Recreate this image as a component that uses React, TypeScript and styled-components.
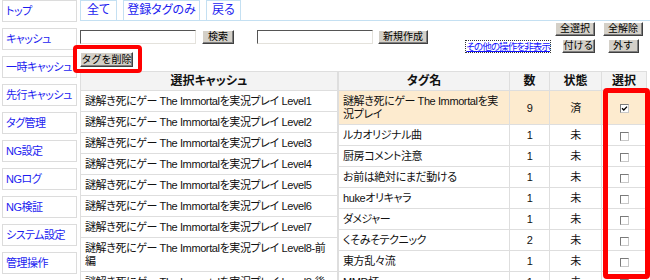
import styled, { createGlobalStyle } from "styled-components"

const GlobalStyle = createGlobalStyle`
  html, body {
    margin: 0;
    padding: 0;
    background: #fff;
    overflow: hidden;
  }
  body {
    font-family: "Liberation Sans", "Noto Sans CJK JP", sans-serif;
    font-size: 11px;
    color: #111;
    font-feature-settings: "palt";
  }
`

const Page = styled.div`
  position: relative;
  display: flex;
  gap: 3px;
  padding-left: 2px;
  width: 650px;
  height: 280px;
  box-sizing: border-box;
`

const Nav = styled.nav`
  width: 75px;
  flex: none;
  display: flex;
  flex-direction: column;
  gap: 6px;
`

const NavItem = styled.a`
  display: block;
  height: 22px;
  box-sizing: border-box;
  border: 1px solid #dcdcdc;
  padding: 4px 0 0 3px;
  color: #1c1cf0;
  font-size: 11px;
  line-height: 13px;
  letter-spacing: -0.5px;
  text-decoration: none;
  white-space: nowrap;
  overflow: hidden;
`

const Main = styled.div`
  flex: 1;
  min-width: 0;
`

const Tabs = styled.div`
  display: flex;
  gap: 6px;
  height: 20px;
  border-bottom: 1px solid #c4e0f2;
`

const Tab = styled.a<{ $w: number }>`
  width: ${p => p.$w}px;
  height: 20px;
  box-sizing: border-box;
  border: 1px solid #c4e0f2;
  border-bottom: none;
  text-align: center;
  font-size: 12px;
  line-height: 19px;
  color: #1c1cf0;
  white-space: nowrap;
`

const Toolbar = styled.div`
  display: flex;
  justify-content: space-between;
  align-items: flex-start;
  height: 50px;
`

const LeftTools = styled.div`
  padding-top: 9px;
  display: flex;
  flex-direction: column;
  gap: 8px;
`

const Row = styled.div`
  display: flex;
  align-items: center;
`

const Field = styled.input<{ $gap?: number }>`
  width: 116px;
  height: 14px;
  box-sizing: border-box;
  margin: 0 0 0 ${p => p.$gap ?? 0}px;
  padding: 0;
  border: 1px solid;
  border-color: #555 #e4e2dc #e4e2dc #555;
  background: #fff;
`

const Btn = styled.button<{ $w: number; $gap?: number; $h?: number }>`
  width: ${p => p.$w}px;
  height: ${p => p.$h ?? 14}px;
  margin: 0 0 0 ${p => p.$gap ?? 0}px;
  padding: 0;
  box-sizing: border-box;
  font-family: inherit;
  font-size: 10px;
  line-height: 10px;
  color: #000;
  background: #d4d0c8;
  border: 1px solid;
  border-color: #fff #404040 #404040 #fff;
  box-shadow: inset -1px -1px #808080;
  white-space: nowrap;
`

const RightTools = styled.div`
  padding-top: 1px;
  padding-right: 7px;
  display: grid;
  grid-template-columns: auto 40px 40px;
  column-gap: 8px;
  row-gap: 3px;
  align-items: center;
`

const MoreLink = styled.a`
  margin-right: -3px;
  color: #1010ff;
  font-size: 9.5px;
  line-height: 11px;
  letter-spacing: -0.9px;
  text-decoration: underline;
  outline: 1px dotted #333;
  white-space: nowrap;
`

const Cell = styled.span<{ $align: "center" | "end" }>`
  display: flex;
  justify-content: ${p => p.$align};
`

const Tables = styled.div`
  display: flex;
  align-items: flex-start;
`

const Table = styled.table<{ $w: number }>`
  width: ${p => p.$w}px;
  flex: none;
  border-collapse: collapse;
  table-layout: fixed;
`

const Th = styled.th<{ $w?: number }>`
  ${p => (p.$w ? `width: ${p.$w}px;` : "")}
  border: 1px solid #dedede;
  background: #f3f3f3;
  padding: 2px 3px;
  font-size: 12px;
  line-height: 14px;
  font-weight: bold;
  text-align: center;
`

const Tr = styled.tr<{ $hl?: boolean }>`
  background: ${p => (p.$hl ? "#fdebcf" : "#fff")};
`

const Td = styled.td<{ $center?: boolean }>`
  border: 1px solid #dedede;
  padding: 4px 4px 3px;
  line-height: 13px;
  font-size: 11px;
  letter-spacing: -0.4px;
  text-align: ${p => (p.$center ? "center" : "left")};
  vertical-align: middle;
`

const Check = styled.span`
  display: inline-block;
  width: 9px;
  height: 9px;
  box-sizing: border-box;
  border: 1px solid;
  border-color: #7a7a7a #c8c8c8 #c8c8c8 #7a7a7a;
  background: #fff;
  vertical-align: middle;
  position: relative;
  svg {
    position: absolute;
    left: 0;
    top: 0;
  }
`

const Mark = styled.div<{ $x: number; $y: number; $w: number; $h: number; $b: number }>`
  position: absolute;
  left: ${p => p.$x}px;
  top: ${p => p.$y}px;
  width: ${p => p.$w}px;
  height: ${p => p.$h}px;
  box-sizing: border-box;
  border: ${p => p.$b}px solid #ff0000;
  border-radius: 4px;
  pointer-events: none;
`

const navItems = ["トップ", "キャッシュ", "一時キャッシュ", "先行キャッシュ", "タグ管理", "NG設定", "NGログ", "NG検証", "システム設定", "管理操作"]

const caches = [
  "謎解き死にゲー The Immortalを実況プレイ Level1",
  "謎解き死にゲー The Immortalを実況プレイ Level2",
  "謎解き死にゲー The Immortalを実況プレイ Level3",
  "謎解き死にゲー The Immortalを実況プレイ Level4",
  "謎解き死にゲー The Immortalを実況プレイ Level5",
  "謎解き死にゲー The Immortalを実況プレイ Level6",
  "謎解き死にゲー The Immortalを実況プレイ Level7",
  "謎解き死にゲー The Immortalを実況プレイ Level8-前編",
  "謎解き死にゲー The Immortalを実況プレイ Level8-後編",
]

const tags = [
  { name: "謎解き死にゲー The Immortalを実況プレイ", count: 9, done: true },
  { name: "ルカオリジナル曲", count: 1, done: false },
  { name: "厨房コメント注意", count: 1, done: false },
  { name: "お前は絶対にまだ動ける", count: 1, done: false },
  { name: "hukeオリキャラ", count: 1, done: false },
  { name: "ダメジャー", count: 1, done: false },
  { name: "くそみそテクニック", count: 2, done: false },
  { name: "東方乱々流", count: 1, done: false },
  { name: "MMD杯", count: 1, done: false },
]

export default function App() {
  return (
    <>
      <GlobalStyle />
      <Page>
        <Nav>
          {navItems.map(n => (
            <NavItem key={n}>{n}</NavItem>
          ))}
        </Nav>
        <Main>
          <Tabs>
            <Tab $w={37}>全て</Tab>
            <Tab $w={77}>登録タグのみ</Tab>
            <Tab $w={35}>戻る</Tab>
          </Tabs>
          <Toolbar>
            <LeftTools>
              <Row>
                <Field />
                <Btn $w={32} $gap={6}>検索</Btn>
                <Field $gap={23} />
                <Btn $w={50} $gap={5}>新規作成</Btn>
              </Row>
              <Row>
                <Btn $w={53} $h={15}>タグを削除</Btn>
              </Row>
            </LeftTools>
            <RightTools>
              <span />
              <Btn $w={40}>全選択</Btn>
              <Btn $w={40}>全解除</Btn>
              <MoreLink>その他の操作を非表示</MoreLink>
              <Cell $align="end">
                <Btn $w={33}>付ける</Btn>
              </Cell>
              <Cell $align="center">
                <Btn $w={31}>外す</Btn>
              </Cell>
            </RightTools>
          </Toolbar>
          <Tables>
            <Table $w={258}>
              <thead>
                <tr>
                  <Th>選択キャッシュ</Th>
                </tr>
              </thead>
              <tbody>
                {caches.map(c => (
                  <Tr key={c}>
                    <Td>{c}</Td>
                  </Tr>
                ))}
              </tbody>
            </Table>
            <Table $w={309}>
              <thead>
                <tr>
                  <Th>タグ名</Th>
                  <Th $w={33}>数</Th>
                  <Th $w={45}>状態</Th>
                  <Th $w={38}>選択</Th>
                </tr>
              </thead>
              <tbody>
                {tags.map(t => (
                  <Tr key={t.name} $hl={t.done}>
                    <Td>{t.name}</Td>
                    <Td $center>{t.count}</Td>
                    <Td $center>{t.done ? "済" : "未"}</Td>
                    <Td $center>
                      <Check>
                        {t.done && (
                          <svg width="7" height="7" viewBox="0 0 7 7">
                            <path d="M1 3.2 L2.8 5 L6 1.6" fill="none" stroke="#000" strokeWidth="1.3" />
                          </svg>
                        )}
                      </Check>
                    </Td>
                  </Tr>
                ))}
              </tbody>
            </Table>
          </Tables>
        </Main>
        <Mark $x={73} $y={45} $w={69} $h={28} $b={4} />
        <Mark $x={603} $y={88} $w={47} $h={191} $b={5} />
      </Page>
    </>
  )
}
